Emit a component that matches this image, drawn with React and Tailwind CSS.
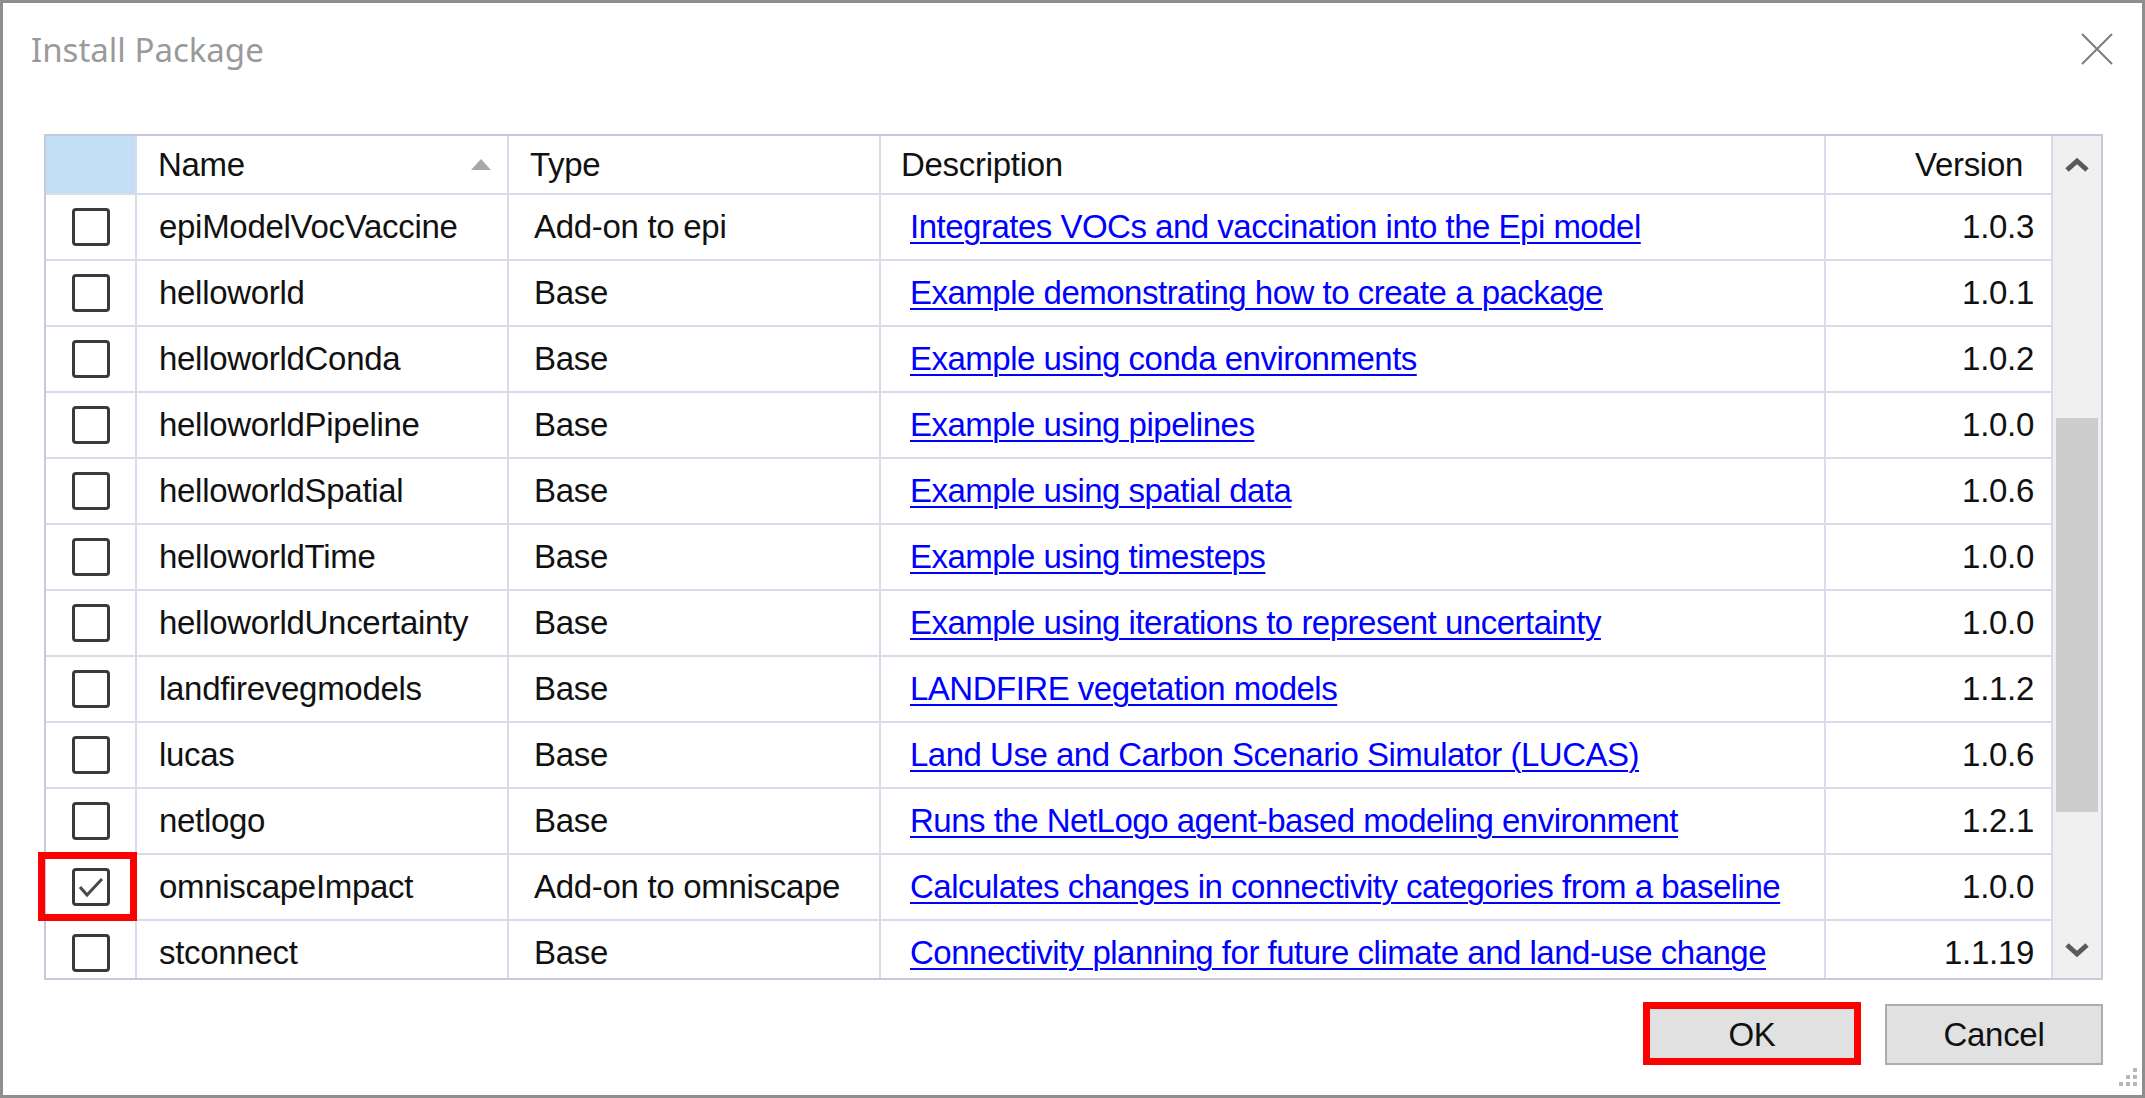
import React from 'react';

const rows = [
  { name: 'epiModelVocVaccine', type: 'Add-on to epi', desc: 'Integrates VOCs and vaccination into the Epi model', ver: '1.0.3' },
  { name: 'helloworld', type: 'Base', desc: 'Example demonstrating how to create a package', ver: '1.0.1' },
  { name: 'helloworldConda', type: 'Base', desc: 'Example using conda environments', ver: '1.0.2' },
  { name: 'helloworldPipeline', type: 'Base', desc: 'Example using pipelines', ver: '1.0.0' },
  { name: 'helloworldSpatial', type: 'Base', desc: 'Example using spatial data', ver: '1.0.6' },
  { name: 'helloworldTime', type: 'Base', desc: 'Example using timesteps', ver: '1.0.0' },
  { name: 'helloworldUncertainty', type: 'Base', desc: 'Example using iterations to represent uncertainty', ver: '1.0.0' },
  { name: 'landfirevegmodels', type: 'Base', desc: 'LANDFIRE vegetation models', ver: '1.1.2' },
  { name: 'lucas', type: 'Base', desc: 'Land Use and Carbon Scenario Simulator (LUCAS)', ver: '1.0.6' },
  { name: 'netlogo', type: 'Base', desc: 'Runs the NetLogo agent-based modeling environment', ver: '1.2.1' },
  { name: 'omniscapeImpact', type: 'Add-on to omniscape', desc: 'Calculates changes in connectivity categories from a baseline', ver: '1.0.0', checked: true },
  { name: 'stconnect', type: 'Base', desc: 'Connectivity planning for future climate and land-use change', ver: '1.1.19' },
];

const Checkbox = ({ checked }) => (
  <div className="w-[38px] h-[38px] border-[3px] border-[#3a3a3a] rounded-[4px] bg-white flex items-center justify-center">
    {checked && (
      <svg width="28" height="24" viewBox="0 0 28 24">
        <path d="M3 12 L10 20 L25 4" fill="none" stroke="#4a4a4a" strokeWidth="3" />
      </svg>
    )}
  </div>
);

const cell = 'h-[66px] flex items-center border-b-2 border-r-2 border-[#d8dcea] overflow-hidden whitespace-nowrap';

export default function App() {
  return (
    <div
      className="relative w-[2145px] h-[1098px] bg-white border-[3px] border-[#8e8e8e] flex flex-col text-[#111]"
      style={{ fontFamily: '"Liberation Sans", Arial, sans-serif' }}
    >
      {/* title bar */}
      <div className="h-[131px] flex items-start justify-between pl-[28px] pr-[29px] pt-[26px]">
        <span className="text-[33px] leading-[42px] text-[#9a9a9a]" style={{ fontFamily: '"Noto Sans", "Open Sans", sans-serif' }}>
          Install Package
        </span>
        <svg width="32" height="32" viewBox="0 0 32 32" className="mt-[4px]">
          <path d="M1 1 L31 31 M31 1 L1 31" stroke="#7c7c7c" strokeWidth="2" />
        </svg>
      </div>

      {/* grid */}
      <div className="ml-[41px] mr-[39px] h-[846px] border-2 border-[#c6c9dc] flex text-[33px] tracking-[-0.3px]">
        <div className="flex-1 overflow-x-visible overflow-y-clip">
          <div className="grid grid-cols-[91px_372px_372px_945px_1fr]">
            <div className="h-[59px] bg-[#c4dff5] border-b-2 border-r-2 border-[#d8dcea]" />
            <div className="h-[59px] flex items-center justify-between pl-[21px] pr-[16px] border-b-2 border-r-2 border-[#d8dcea]">
              <span>Name</span>
              <svg width="20" height="11" viewBox="0 0 20 11">
                <path d="M0 11 L10 0 L20 11 Z" fill="#a8a8a8" />
              </svg>
            </div>
            <div className="h-[59px] flex items-center pl-[21px] border-b-2 border-r-2 border-[#d8dcea]">Type</div>
            <div className="h-[59px] flex items-center pl-[20px] border-b-2 border-r-2 border-[#d8dcea]">Description</div>
            <div className="h-[59px] flex items-center justify-end pr-[28px] border-b-2 border-r-2 border-[#d8dcea]">Version</div>

            {rows.map((r) => (
              <React.Fragment key={r.name}>
                <div className={`${cell} justify-center relative overflow-visible`}>
                  <Checkbox checked={r.checked} />
                  {r.checked && (
                    <div className="absolute left-[-8px] right-[-2px] top-[-3px] bottom-[-2px] border-[7px] border-[#ff0000]" />
                  )}
                </div>
                <div className={`${cell} pl-[22px]`}>{r.name}</div>
                <div className={`${cell} pl-[25px]`}>{r.type}</div>
                <div className={`${cell} pl-[29px]`}>
                  <span className="text-[#0000ff] underline underline-offset-[4px] decoration-2 tracking-[-0.5px]">{r.desc}</span>
                </div>
                <div className={`${cell} justify-end pr-[17px]`}>{r.ver}</div>
              </React.Fragment>
            ))}
          </div>
        </div>

        {/* scrollbar */}
        <div className="w-[48px] bg-[#f0f0f0] flex flex-col items-center">
          <div className="h-[58px] flex items-center justify-center">
            <svg width="26" height="16" viewBox="0 0 26 16">
              <path d="M3 13 L13 4 L23 13" fill="none" stroke="#5a5a5a" strokeWidth="5" />
            </svg>
          </div>
          <div className="h-[224px]" />
          <div className="w-[42px] h-[394px] bg-[#cdcdcd]" />
          <div className="flex-1" />
          <div className="h-[56px] flex items-center justify-center">
            <svg width="26" height="16" viewBox="0 0 26 16">
              <path d="M3 3 L13 12 L23 3" fill="none" stroke="#5a5a5a" strokeWidth="5" />
            </svg>
          </div>
        </div>
      </div>

      {/* buttons */}
      <div className="flex justify-end gap-[26px] mr-[39px] mt-[24px] text-[33px] tracking-[-0.3px]">
        <div className="relative w-[214px] h-[61px] bg-[#e1e1e1] border-2 border-[#0078d7] flex items-center justify-center">
          OK
          <div className="absolute left-[-4px] right-[-4px] top-[-4px] bottom-[-2px] border-[7px] border-[#ff0000]" />
        </div>
        <div className="w-[218px] h-[61px] bg-[#e1e1e1] border-2 border-[#adadad] flex items-center justify-center">
          Cancel
        </div>
      </div>

      {/* resize grip */}
      <svg width="26" height="26" viewBox="0 0 26 26" className="absolute right-[4px] bottom-[6px]">
        {[[21, 5], [14, 12], [21, 12], [7, 19], [14, 19], [21, 19]].map(([x, y]) => (
          <rect key={`${x}-${y}`} x={x} y={y} width="4" height="4" fill="#b8b8b8" />
        ))}
      </svg>
    </div>
  );
}
